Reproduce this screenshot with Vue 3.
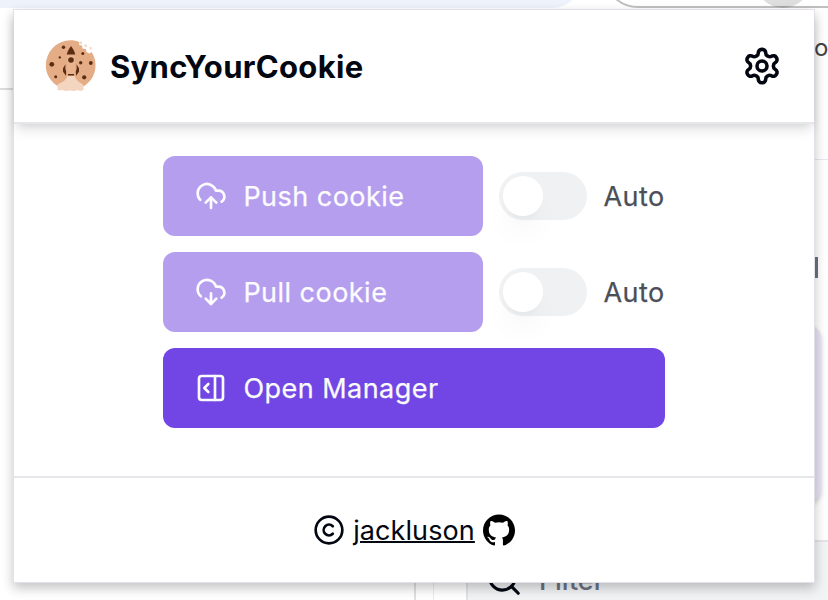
<script setup>
const actions = [
  {
    label: 'Push cookie',
    paths: ['M12 13v8', 'M4 14.899A7 7 0 1 1 15.71 8h1.79a4.5 4.5 0 0 1 2.5 8.242', 'm8 17 4-4 4 4'],
  },
  {
    label: 'Pull cookie',
    paths: ['M12 13v8l-4-4', 'm12 21 4-4', 'M4.393 15.269A7 7 0 1 1 15.71 8h1.79a4.5 4.5 0 0 1 2.436 8.284'],
  },
]
</script>

<template>
  <div class="screen">
    <div class="page" aria-hidden="true">
      <div class="tabstrip"></div>
      <div class="omnibox"></div>
      <div class="avatar"></div>
      <div class="rule rule-left"></div>
      <div class="rule rule-right"></div>
      <span class="peek peek-o">o</span>
      <span class="peek-bar"></span>
      <div class="lilac"></div>
      <div class="gutter"></div>
      <div class="panel"></div>
      <div class="panel-top"></div>
      <svg class="search icon" viewBox="0 0 24 24"><circle cx="11" cy="11" r="8" /><path d="m21 21-4.3-4.3" /></svg>
      <span class="filter">Filter</span>
    </div>

    <main class="popup">
      <header class="header">
        <div class="brand">
          <svg class="cookie" viewBox="-.5 0 52 52">
            <path fill="#e5ad86" d="M34 2.2C31.500 .9 28 .3 25 .3A25 25 0 0 0 .3 25.500C.3 34 5 42 13 46.500L37 47C45 42.500 50 35 50 25.500C50 20 48.500 15.500 46 12L44 13.500 41 12 40.500 9 37 8.500 36.500 5.500 33.500 5Z" />
            <g fill="#f3d8c4"><rect x="34" y="1.500" width="2.500" height="2.500" /><rect x="39" y="4.500" width="2.500" height="2.500" /><rect x="44" y="7" width="2" height="2.500" /></g>
            <path fill="#f3d5c0" d="M22 36h7c1 3 3 5 6 7 2 1 3 1.500 3 3.500v3.500l-3 1-3-1-3 1-5-.5-4 .5-3-1-3 .5-2-1v-3.500c0-2 1-2.500 3-3 4-2 6-4 7-7Z" />
            <path fill="#e8b38d" d="M21.500 16h8v18h-8z" />
            <g fill="#5b2d14">
              <path d="M25.500 6C23.500 8.500 22 11 21.300 14.500h8.400c-.7-3.500-2.200-6-4.200-8.500Z" />
              <circle cx="25.500" cy="20" r="2.800" />
              <path d="m20 24.300-2.500 4v3.500l3 4 .2-4-.9-3.500zM31 24.300l2.500 4v3.500l-3 4-.2-4 .9-3.500zM22.500 34h6v1.600h-6z" />
              <circle cx="18" cy="7.300" r="1.700" /><circle cx="14.300" cy="17.400" r="1.200" />
              <circle cx="6.300" cy="24.300" r="2.400" /><circle cx="10.200" cy="36.700" r="1.500" />
              <circle cx="37.300" cy="13.500" r="1.500" /><circle cx="35.200" cy="22.700" r="1.700" />
              <circle cx="45.300" cy="23" r="1.900" /><circle cx="38.700" cy="37.300" r="2.100" />
            </g>
          </svg>
          <h1>SyncYourCookie</h1>
        </div>
        <svg class="gear icon" viewBox="0 0 24 24">
          <path d="M12.22 2h-.44a2 2 0 0 0-2 2v.18a2 2 0 0 1-1 1.73l-.43.25a2 2 0 0 1-2 0l-.15-.08a2 2 0 0 0-2.73.73l-.22.38a2 2 0 0 0 .73 2.73l.15.1a2 2 0 0 1 1 1.72v.51a2 2 0 0 1-1 1.74l-.15.09a2 2 0 0 0-.73 2.73l.22.38a2 2 0 0 0 2.73.73l.15-.08a2 2 0 0 1 2 0l.43.25a2 2 0 0 1 1 1.73V20a2 2 0 0 0 2 2h.44a2 2 0 0 0 2-2v-.18a2 2 0 0 1 1-1.73l.43-.25a2 2 0 0 1 2 0l.15.08a2 2 0 0 0 2.73-.73l.22-.39a2 2 0 0 0-.73-2.73l-.15-.08a2 2 0 0 1-1-1.74v-.5a2 2 0 0 1 1-1.74l.15-.09a2 2 0 0 0 .73-2.73l-.22-.38a2 2 0 0 0-2.73-.73l-.15.08a2 2 0 0 1-2 0l-.43-.25a2 2 0 0 1-1-1.73V4a2 2 0 0 0-2-2z" />
          <circle cx="12" cy="12" r="3" />
        </svg>
      </header>

      <section class="body">
        <div class="actions">
          <div v-for="a in actions" :key="a.label" class="row">
            <button class="btn muted">
              <svg class="icon" viewBox="0 0 24 24"><path v-for="p in a.paths" :key="p" :d="p" /></svg>
              <span class="label">{{ a.label }}</span>
            </button>
            <div class="switch"><div class="thumb"></div></div>
            <span class="auto">Auto</span>
          </div>
          <button class="btn">
            <svg class="icon" viewBox="0 0 24 24"><rect x="3" y="3" width="18" height="18" rx="2" /><path d="M15 3v18" /><path d="m10 15-3-3 3-3" /></svg>
            <span class="label">Open Manager</span>
          </button>
        </div>
      </section>

      <footer class="footer">
        <svg class="icon" viewBox="0 0 24 24"><circle cx="12" cy="12" r="10" /><path d="M14.830 14.830a4 4 0 1 1 0-5.660" /></svg>
        <a class="author">jackluson</a>
        <svg class="github" viewBox="0 0 24 24"><path d="M12 .297c-6.630 0-12 5.373-12 12 0 5.303 3.438 9.800 8.205 11.385.6.113.82-.258.82-.577 0-.285-.01-1.040-.015-2.040-3.338.724-4.042-1.610-4.042-1.610C4.422 18.070 3.633 17.700 3.633 17.700c-1.087-.744.084-.729.084-.729 1.205.084 1.838 1.236 1.838 1.236 1.070 1.835 2.809 1.305 3.495.998.108-.776.417-1.305.76-1.605-2.665-.3-5.466-1.332-5.466-5.930 0-1.310.465-2.380 1.235-3.220-.135-.303-.54-1.523.105-3.176 0 0 1.005-.322 3.300 1.230.96-.267 1.980-.399 3-.405 1.020.006 2.040.138 3 .405 2.280-1.552 3.285-1.230 3.285-1.230.645 1.653.24 2.873.12 3.176.765.840 1.230 1.910 1.230 3.220 0 4.610-2.805 5.625-5.475 5.920.42.360.81 1.096.81 2.220 0 1.606-.015 2.896-.015 3.286 0 .315.21.690.825.570C20.565 22.092 24 17.592 24 12.297c0-6.627-5.373-12-12-12" /></svg>
      </footer>
    </main>
  </div>
</template>

<style>
body { margin: 0; background: #fff; }
</style>

<style scoped>
.screen { position: relative; box-sizing: border-box; width: 828px; height: 600px; padding: 9px 13px 17px; overflow: hidden; background: #fff; font-family: Inter, "Liberation Sans", sans-serif; color: #030712; }
.page { position: absolute; inset: 0; }
.page > * { position: absolute; box-sizing: border-box; }
.icon { flex: none; width: 32px; height: 32px; fill: none; stroke: currentColor; stroke-width: 2; stroke-linecap: round; stroke-linejoin: round; }
.tabstrip { left: -40px; top: -32px; width: 622px; height: 40px; border-radius: 0 0 30px 0; background: #edf2fb; }
.omnibox { left: 603px; top: -62px; width: 300px; height: 70px; border: 2px solid #bec1bf; border-radius: 35px; }
.avatar { left: 755px; top: -48px; width: 56px; height: 56px; border-radius: 50%; background: rgba(0, 0, 0, .13); }
.rule-left { left: 0; top: 88px; width: 14px; height: 2px; background: #dcdddd; }
.rule-right { left: 814px; top: 159px; width: 14px; height: 1px; background: #e8e9f0; }
.peek-o { left: 814px; top: 33px; font-size: 24px; line-height: 29px; color: #444; }
.peek-bar { left: 814px; top: 257px; width: 4px; height: 21px; background: #6b7280; }
.lilac { left: 780px; top: 325px; width: 41px; height: 178px; border-radius: 14px; background: #e6e2f3; box-shadow: 0 2px 5px rgba(0, 0, 0, .2); }
.gutter { left: 414px; top: 560px; width: 20px; height: 40px; border-left: 2px solid #dfe0e2; border-right: 1px solid #ececef; }
.panel { left: 466px; top: 560px; width: 362px; height: 40px; border-left: 2px solid #e1e3e6; background: #f2f3f5; }
.panel-top { left: 780px; top: 540px; width: 48px; height: 60px; border-top: 2px solid #e2e4e8; background: #f2f3f5; }
.search { left: 485px; top: 560px; width: 38px; height: 38px; }
.filter { left: 539px; top: 564px; font-size: 27px; line-height: 34px; font-weight: 500; color: #6b7280; }

.popup { position: relative; box-sizing: border-box; display: flex; flex-direction: column; width: 802px; height: 574px; border: 1px solid #e5dfe8; background: #fff; box-shadow: 0 5px 11px rgba(0, 0, 0, .24); }
.header { box-sizing: border-box; display: flex; align-items: center; justify-content: space-between; height: 114px; padding: 0 32px 0 31px; border-bottom: 2px solid #e5e7eb; box-shadow: 0 8px 12px -2px rgba(0, 0, 0, .11), 0 4px 8px -4px rgba(0, 0, 0, .1); }
.brand { display: flex; align-items: center; gap: 13px; }
.cookie { width: 52px; height: 52px; }
h1 { margin: 0; padding-top: 2px; font-size: 31px; line-height: 40px; font-weight: 700; letter-spacing: .32px; }
.gear { width: 40px; height: 40px; stroke-width: 2.15; }
.body { display: flex; flex: 1; justify-content: center; align-items: flex-start; padding-top: 32px; }
.actions { display: flex; flex-direction: column; gap: 16px; width: 502px; }
.row { display: flex; align-items: center; }
.btn { box-sizing: border-box; display: flex; flex: none; align-items: center; gap: 16px; height: 80px; padding: 0 32px; border: 0; border-radius: 12px; background: #7146e4; color: #f9fafb; font: 400 27px/40px Inter, "Liberation Sans", sans-serif; letter-spacing: .47px; -webkit-text-stroke: .25px currentColor; }
.label { padding: 1px 0 0 .4px; }
.muted { width: 320px; background: #b59eee; color: #fcfbfe; }
.switch { box-sizing: border-box; flex: none; width: 88px; height: 48px; margin: 0 16px; padding: 4px; border-radius: 24px; background: #f0f1f3; }
.thumb { width: 40px; height: 40px; border-radius: 50%; background: #fff; box-shadow: 0 20px 30px -6px rgba(0, 0, 0, .05), 0 8px 12px -8px rgba(0, 0, 0, .06); }
.auto { padding: 1px 0 0 .4px; font-size: 27px; line-height: 40px; letter-spacing: .47px; color: #4b4f58; -webkit-text-stroke: .25px currentColor; }
.footer { box-sizing: border-box; display: flex; align-items: center; justify-content: center; gap: 8px; height: 106px; border-top: 2px solid #e5e7eb; }
.author { padding-top: 1px; font-size: 27px; line-height: 40px; letter-spacing: .1px; text-decoration: underline; text-decoration-thickness: 2px; }
.github { width: 32px; height: 32px; fill: #000; }
</style>
